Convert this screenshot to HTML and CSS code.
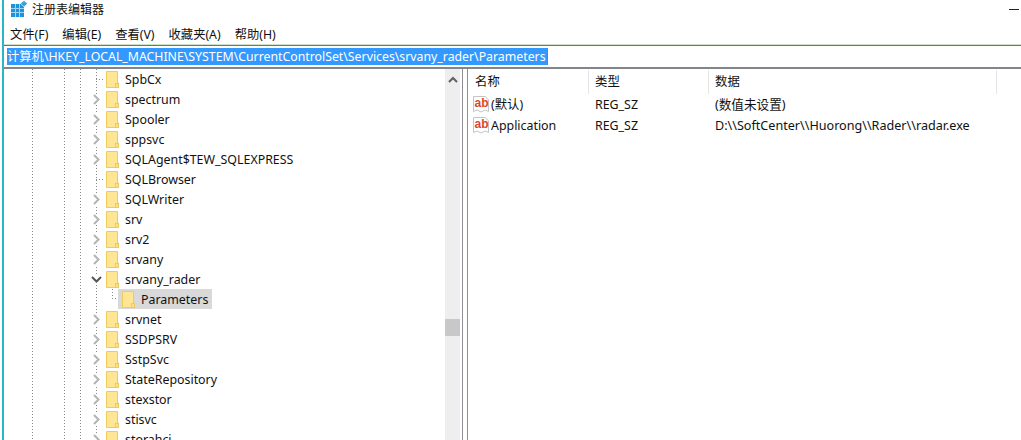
FILE: index.html
```html
<!DOCTYPE html>
<html lang="zh-CN">
<head>
    <meta charset="UTF-8">
    <title>注册表编辑器</title>
    <link rel="stylesheet" href="styles.css">
</head>
<body>
    <svg class="defs" width="0" height="0">
        <symbol id="folder" viewBox="0 0 13 17">
            <path d="M.5.500H11.500V12H12.500V16.500H.5Z" fill="#ffe694" stroke="#eecb5a"/>
            <rect x="9.500" y="12.500" width="3" height="4" fill="#ffdf80" stroke="#eecb5a"/>
        </symbol>
        <symbol id="closed" viewBox="0 0 11 11">
            <path d="M3 1L7.500 5.500L3 10" fill="none" stroke="#b3b3b3" stroke-width="2"/>
        </symbol>
        <symbol id="open" viewBox="0 0 11 11">
            <path d="M1 3L5.500 7.500L10 3" fill="none" stroke="#555" stroke-width="2"/>
        </symbol>
        <symbol id="regsz" viewBox="0 0 16 17">
            <path d="M.5.500H12.500L15.500 4V15.500L12 14L8 16L4 14L.5 15.500Z" fill="#fff" stroke="#c4c4c4"/>
            <text x="1.500" y="11" class="ab">ab</text>
        </symbol>
    </svg>

    <div class="edge"></div>
    <div class="window">
        <div class="titlebar">
            <svg class="appicon" width="18" height="18" viewBox="0 0 18 18">
                <path d="M0 4H13V17H0Z" fill="#1b93dd"/>
                <path d="M4.500 4V17M8.500 4V17M0 8.500H13M0 12.500H13" stroke="#9fd4f2" stroke-width="1"/>
                <path d="M13 .5L16.500 3.500L13 7L9.500 3.500Z" fill="#3aa0e0" stroke="#fff" stroke-width=".6"/>
            </svg>
            <span class="title">注册表编辑器</span>
            <span class="minimize"></span>
        </div>
        <div class="menubar">
            <span>文件(F)</span>
            <span>编辑(E)</span>
            <span>查看(V)</span>
            <span>收藏夹(A)</span>
            <span>帮助(H)</span>
        </div>
        <div class="addressbar">
            <span class="selected">计算机\HKEY_LOCAL_MACHINE\SYSTEM\CurrentControlSet\Services\srvany_rader\Parameters</span>
        </div>
        <div class="main">
            <div class="treepane">
                <ul class="tree">
                    <li class="row"><span class="leaf"></span><svg class="folder"><use href="#folder"/></svg><span class="name">SpbCx</span></li>
                    <li class="row"><svg class="arrow"><use href="#closed"/></svg><svg class="folder"><use href="#folder"/></svg><span class="name">spectrum</span></li>
                    <li class="row"><svg class="arrow"><use href="#closed"/></svg><svg class="folder"><use href="#folder"/></svg><span class="name">Spooler</span></li>
                    <li class="row"><svg class="arrow"><use href="#closed"/></svg><svg class="folder"><use href="#folder"/></svg><span class="name">sppsvc</span></li>
                    <li class="row"><svg class="arrow"><use href="#closed"/></svg><svg class="folder"><use href="#folder"/></svg><span class="name">SQLAgent$TEW_SQLEXPRESS</span></li>
                    <li class="row"><span class="leaf"></span><svg class="folder"><use href="#folder"/></svg><span class="name">SQLBrowser</span></li>
                    <li class="row"><svg class="arrow"><use href="#closed"/></svg><svg class="folder"><use href="#folder"/></svg><span class="name">SQLWriter</span></li>
                    <li class="row"><svg class="arrow"><use href="#closed"/></svg><svg class="folder"><use href="#folder"/></svg><span class="name">srv</span></li>
                    <li class="row"><svg class="arrow"><use href="#closed"/></svg><svg class="folder"><use href="#folder"/></svg><span class="name">srv2</span></li>
                    <li class="row"><svg class="arrow"><use href="#closed"/></svg><svg class="folder"><use href="#folder"/></svg><span class="name">srvany</span></li>
                    <li class="row"><svg class="arrow"><use href="#open"/></svg><svg class="folder"><use href="#folder"/></svg><span class="name">srvany_rader</span></li>
                    <li class="row child"><span class="elbow"></span><span class="current"><svg class="folder"><use href="#folder"/></svg><span class="name">Parameters</span></span></li>
                    <li class="row"><svg class="arrow"><use href="#closed"/></svg><svg class="folder"><use href="#folder"/></svg><span class="name">srvnet</span></li>
                    <li class="row"><svg class="arrow"><use href="#closed"/></svg><svg class="folder"><use href="#folder"/></svg><span class="name">SSDPSRV</span></li>
                    <li class="row"><svg class="arrow"><use href="#closed"/></svg><svg class="folder"><use href="#folder"/></svg><span class="name">SstpSvc</span></li>
                    <li class="row"><svg class="arrow"><use href="#closed"/></svg><svg class="folder"><use href="#folder"/></svg><span class="name">StateRepository</span></li>
                    <li class="row"><svg class="arrow"><use href="#closed"/></svg><svg class="folder"><use href="#folder"/></svg><span class="name">stexstor</span></li>
                    <li class="row"><svg class="arrow"><use href="#closed"/></svg><svg class="folder"><use href="#folder"/></svg><span class="name">stisvc</span></li>
                    <li class="row"><svg class="arrow"><use href="#closed"/></svg><svg class="folder"><use href="#folder"/></svg><span class="name">storahci</span></li>
                </ul>
                <div class="scrollbar">
                    <svg class="scrollup" width="10" height="7" viewBox="0 0 10 7"><path d="M1 6L5 2L9 6" fill="none" stroke="#606060" stroke-width="2"/></svg>
                    <div class="thumb"></div>
                </div>
            </div>
            <div class="splitter"></div>
            <div class="values">
                <div class="vrow vhead">
                    <span class="col-name">名称</span>
                    <span class="col-type">类型</span>
                    <span class="col-data">数据</span>
                </div>
                <div class="vrow">
                    <span class="col-name"><svg class="regsz"><use href="#regsz"/></svg>(默认)</span>
                    <span class="col-type">REG_SZ</span>
                    <span class="col-data">(数值未设置)</span>
                </div>
                <div class="vrow">
                    <span class="col-name"><svg class="regsz"><use href="#regsz"/></svg>Application</span>
                    <span class="col-type">REG_SZ</span>
                    <span class="col-data">D:\\SoftCenter\\Huorong\\Rader\\radar.exe</span>
                </div>
            </div>
        </div>
    </div>
</body>
</html>
```

FILE: styles.css
```css
html, body {
    margin: 0;
    height: 100%;
    overflow: hidden;
    background: #fff;
}
body {
    display: flex;
    font-family: "Noto Sans", "Noto Sans CJK SC", sans-serif;
    font-size: 12.4px;
    color: #111;
}
.defs {
    position: absolute;
}
.edge {
    width: 2px;
    margin-left: 2px;
    background: #2bb6c6;
    flex: none;
}
.window {
    flex: 1;
    min-width: 0;
    display: flex;
    flex-direction: column;
}
.titlebar {
    height: 23px;
    display: flex;
    align-items: center;
    padding: 0 0 5px 7px;
    box-sizing: border-box;
}
.appicon {
    margin-right: 3px;
}
.title {
    flex: 1;
    font-size: 12px;
}
.minimize {
    width: 10px;
    height: 1px;
    background: #222;
    margin-right: 2px;
}
.menubar {
    height: 21px;
    display: flex;
    align-items: center;
    gap: 14px;
    padding-left: 6px;
    font-size: 12.3px;
}
.addressbar {
    height: 23px;
    box-sizing: border-box;
    border-top: 1px solid #cfe0c8;
    box-shadow: inset 0 1px 0 #6f7472;
    padding: 3px 0 0 3px;
    display: flex;
    align-items: flex-start;
    font-size: 12.3px;
    line-height: 17px;
}
.selected {
    background: #3399ff;
    color: #fff;
    padding-right: 1px;
    border-right: 1px solid #d06a10;
}
.main {
    flex: 1;
    min-height: 0;
    display: flex;
    border-top: 2px solid #82868a;
}
.treepane {
    width: 457px;
    flex: none;
    display: flex;
}
.tree {
    flex: 1;
    list-style: none;
    margin: 0;
    padding: 0 0 0 87px;
    overflow: hidden;
    background-image:
        repeating-linear-gradient(#888 0 1px, transparent 1px 3px),
        repeating-linear-gradient(#888 0 1px, transparent 1px 3px),
        repeating-linear-gradient(#888 0 1px, transparent 1px 3px),
        repeating-linear-gradient(#888 0 1px, transparent 1px 3px);
    background-size: 1px 100%;
    background-repeat: no-repeat;
    background-position: 28px 0, 60px 0, 76px 0, 92px 0;
}
.row {
    height: 20px;
    display: flex;
    align-items: center;
    white-space: nowrap;
}
.arrow {
    width: 11px;
    height: 11px;
    margin-right: 4px;
    flex: none;
    background: #fff;
}
.leaf {
    width: 7px;
    height: 1px;
    margin-left: 5px;
    margin-right: 3px;
    background: repeating-linear-gradient(90deg, #888 0 1px, transparent 1px 3px);
}
.folder {
    width: 13px;
    height: 17px;
    flex: none;
}
.name {
    margin-left: 6px;
}
.child {
    padding-left: 21px;
}
.elbow {
    width: 6px;
    height: 10px;
    margin-bottom: 10px;
    flex: none;
    background:
        repeating-linear-gradient(#888 0 1px, transparent 1px 3px) left / 1px 100% no-repeat,
        repeating-linear-gradient(90deg, #888 0 1px, transparent 1px 3px) bottom / 100% 1px no-repeat;
}
.current {
    display: flex;
    align-items: center;
    height: 20px;
    padding: 0 4px;
    background: #d9d9d9;
}
.scrollbar {
    width: 15px;
    flex: none;
    margin-right: 1px;
    background: #eeeeee;
    display: flex;
    flex-direction: column;
    align-items: center;
}
.scrollup {
    margin-top: 7px;
}
.thumb {
    align-self: stretch;
    height: 17px;
    margin-top: 236px;
    background: #c8c8c8;
}
.splitter {
    width: 4px;
    flex: none;
    border: solid #8c9094;
    border-width: 0 1px;
    margin: 0 1px;
}
.values {
    flex: 1;
    min-width: 0;
    padding-top: 1px;
}
.vrow {
    display: flex;
    height: 21px;
    align-items: center;
    line-height: 17px;
}
.vhead {
    height: 24px;
}
.col-name {
    width: 120px;
    padding-left: 4px;
    box-sizing: border-box;
    display: flex;
    align-items: center;
}
.col-type {
    width: 120px;
    padding-left: 6px;
    box-sizing: border-box;
}
.col-data {
    padding-left: 6px;
    font-size: 12.6px;
}
.vhead span {
    height: 24px;
    line-height: 24px;
    border-right: 1px solid #e5e5e5;
    box-sizing: border-box;
}
.vhead .col-name {
    padding-left: 6px;
}
.vhead .col-data {
    width: 288px;
    font-size: 12.4px;
}
.regsz {
    width: 16px;
    height: 17px;
    flex: none;
    margin-right: 2px;
}
.ab {
    font-family: "Liberation Sans", sans-serif;
    font-weight: bold;
    font-size: 12px;
    fill: #d8482a;
}
```
